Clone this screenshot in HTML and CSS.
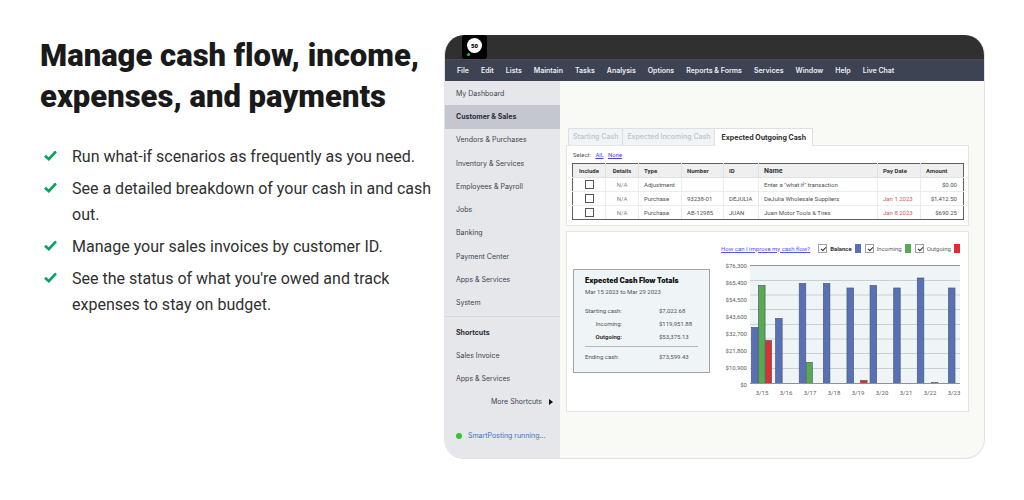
FILE: index.html
```html
<!DOCTYPE html>
<html lang="en">
<head>
<meta charset="utf-8">
<meta name="viewport" content="width=device-width, initial-scale=1">
<title>Manage cash flow, income, expenses, and payments</title>
<link rel="stylesheet" href="styles.css">
</head>
<body>
<main class="feature">
  <section class="copy">
    <h1 class="headline">Manage cash flow, income, expenses, and payments</h1>
    <ul class="benefits">
      <li><svg class="tick" viewBox="0 0 13 11" aria-hidden="true"><path d="M1 5.8 4.8 9.2 12 1.4"/></svg><span>Run what-if scenarios as frequently as you need.</span></li>
      <li><svg class="tick" viewBox="0 0 13 11" aria-hidden="true"><path d="M1 5.8 4.8 9.2 12 1.4"/></svg><span>See a detailed breakdown of your cash in and cash out.</span></li>
      <li><svg class="tick" viewBox="0 0 13 11" aria-hidden="true"><path d="M1 5.8 4.8 9.2 12 1.4"/></svg><span>Manage your sales invoices by customer ID.</span></li>
      <li><svg class="tick" viewBox="0 0 13 11" aria-hidden="true"><path d="M1 5.8 4.8 9.2 12 1.4"/></svg><span>See the status of what you're owed and track expenses to stay on budget.</span></li>
    </ul>
  </section>

  <section class="app" aria-label="Accounting application">
    <header class="titlebar">
      <div class="logo"><span class="logo-disc">50</span><span class="logo-dot"></span></div>
    </header>
    <nav class="menubar" aria-label="Menu">
      <a href="#">File</a><a href="#">Edit</a><a href="#">Lists</a><a href="#">Maintain</a><a href="#">Tasks</a><a href="#">Analysis</a><a href="#">Options</a><a href="#">Reports &amp; Forms</a><a href="#">Services</a><a href="#">Window</a><a href="#">Help</a><a href="#">Live Chat</a>
    </nav>
    <div class="body">
      <aside class="sidebar">
        <nav class="side-nav" aria-label="Sections">
          <a href="#">My Dashboard</a>
          <a href="#" class="current">Customer &amp; Sales</a>
          <a href="#">Vendors &amp; Purchases</a>
          <a href="#">Inventory &amp; Services</a>
          <a href="#">Employees &amp; Payroll</a>
          <a href="#">Jobs</a>
          <a href="#">Banking</a>
          <a href="#">Payment Center</a>
          <a href="#">Apps &amp; Services</a>
          <a href="#">System</a>
        </nav>
        <nav class="shortcuts" aria-label="Shortcuts">
          <h2>Shortcuts</h2>
          <a href="#">Sales Invoice</a>
          <a href="#">Apps &amp; Services</a>
          <a href="#" class="more">More Shortcuts <svg class="caret" viewBox="0 0 4 6" aria-hidden="true"><path d="M0 0 4 3 0 6z"/></svg></a>
        </nav>
        <p class="posting"><span class="posting-dot"></span>SmartPosting running...</p>
      </aside>

      <div class="work">
        <div class="tabs" role="tablist">
          <button type="button" role="tab">Starting Cash</button>
          <button type="button" role="tab">Expected Incoming Cash</button>
          <button type="button" role="tab" aria-selected="true" class="active">Expected Outgoing Cash</button>
        </div>
        <div class="panel entries">
          <p class="select-line">Select: <a href="#">All,</a> <a href="#">None</a></p>
          <table class="grid">
            <colgroup><col class="c-inc"><col class="c-det"><col class="c-type"><col class="c-num"><col class="c-id"><col class="c-name"><col class="c-date"><col class="c-amt"></colgroup>
            <thead>
              <tr><th class="mid">Include</th><th class="mid">Details</th><th>Type</th><th>Number</th><th>ID</th><th class="name">Name</th><th>Pay Date</th><th>Amount</th></tr>
            </thead>
            <tbody>
              <tr><td class="mid"><input type="checkbox" class="pick" aria-label="Include what if transaction"></td><td class="mid na">N/A</td><td>Adjustment</td><td></td><td></td><td>Enter a "what if" transaction</td><td></td><td class="num">$0.00</td></tr>
              <tr><td class="mid"><input type="checkbox" class="pick" aria-label="Include DeJulia Wholesale Suppliers"></td><td class="mid na">N/A</td><td>Purchase</td><td>93238-01</td><td>DEJULIA</td><td>DeJulia Wholesale Suppliers</td><td class="late">Jan 1 2023</td><td class="num">$1,412.50</td></tr>
              <tr><td class="mid"><input type="checkbox" class="pick" aria-label="Include Juan Motor Tools and Tires"></td><td class="mid na">N/A</td><td>Purchase</td><td>AB-12985</td><td>JUAN</td><td>Juan Motor Tools &amp; Tires</td><td class="late">Jan 8 2023</td><td class="num">$690.25</td></tr>
            </tbody>
          </table>
        </div>

        <div class="panel forecast">
          <div class="totals">
            <h2>Expected Cash Flow Totals</h2>
            <p class="period">Mar 15 2023 to Mar 29 2023</p>
            <dl>
              <dt>Starting cash:</dt><dd>$7,022.68</dd>
              <dt class="indent">Incoming:</dt><dd>$119,951.88</dd>
              <dt class="indent strong">Outgoing:</dt><dd>$53,375.13</dd>
            </dl>
            <dl class="ending">
              <dt>Ending cash:</dt><dd>$73,599.43</dd>
            </dl>
          </div>
          <div class="chart">
            <div class="legend">
              <a href="#">How can I improve my cash flow?</a>
              <label class="strong"><input type="checkbox" class="series" checked>Balance<span class="swatch blue"></span></label>
              <label><input type="checkbox" class="series" checked>Incoming<span class="swatch green"></span></label>
              <label><input type="checkbox" class="series" checked>Outgoing<span class="swatch red"></span></label>
            </div>
            <div class="y-axis"><span>$76,300</span><span>$65,400</span><span>$54,500</span><span>$43,600</span><span>$32,700</span><span>$21,800</span><span>$10,900</span><span>$0</span></div>
            <div class="plot-area">
              <svg class="plot" viewBox="0 0 209 119" preserveAspectRatio="none" role="img" aria-label="Balance, incoming and outgoing cash by day">
                <rect width="209" height="119" fill="#eff4f7"/>
                <path class="gridlines" d="M0 15.5H209M0 30H209M0 44.5H209M0 59.5H209M0 74H209M0 88.5H209M0 103.5H209"/>
                <g class="bar blue">
                  <rect x="1.5" y="62.5" width="6.5" height="56"/>
                  <rect x="25.5" y="53.5" width="6.5" height="65"/>
                  <rect x="49" y="18.5" width="6.5" height="100"/>
                  <rect x="73" y="18.5" width="6.5" height="100"/>
                  <rect x="96.5" y="23" width="6.5" height="95.5"/>
                  <rect x="119.5" y="20.5" width="6.5" height="98"/>
                  <rect x="143" y="23" width="6.5" height="95.5"/>
                  <rect x="166.5" y="13" width="6.5" height="105.5"/>
                  <rect x="197.5" y="23" width="6.5" height="95.5"/>
                </g>
                <g class="bar green">
                  <rect x="8.5" y="20.5" width="6.5" height="98"/>
                  <rect x="56" y="97.5" width="6" height="21"/>
                </g>
                <g class="bar red">
                  <rect x="15.5" y="75.5" width="6" height="43"/>
                  <rect x="110" y="115.5" width="6.5" height="3"/>
                  <rect x="180.5" y="117.5" width="6.5" height="1"/>
                </g>
                <path class="axis" d="M0 .5H209M0 118.5H209"/>
              </svg>
              <div class="x-axis"><span>3/15</span><span>3/16</span><span>3/17</span><span>3/18</span><span>3/19</span><span>3/20</span><span>3/21</span><span>3/22</span><span>3/23</span></div>
            </div>
          </div>
        </div>
      </div>
    </div>
  </section>
</main>
</body>
</html>
```
FILE: styles.css
```css
* { box-sizing: border-box; }

body {
  margin: 0;
  background: #fff;
  color: #1a1a1a;
  font-family: Roboto, "Liberation Sans", sans-serif;
}

h1, h2, p, ul, dl, dd { margin: 0; padding: 0; }
a { color: inherit; text-decoration: none; }

.feature {
  display: grid;
  grid-template-columns: 396fr 541fr;
  gap: 8px;
  align-items: start;
  padding: 35px 39px 40px 40px;
}

/* Copy */
.headline {
  font-size: 31px;
  line-height: 41px;
  font-weight: 900;
  font-variant-ligatures: none;
}

.benefits {
  display: grid;
  gap: 6px;
  margin-top: 27px;
  list-style: none;
  color: #303030;
  font-size: 16px;
  line-height: 26px;
}

.benefits li {
  display: grid;
  grid-template-columns: 13px 1fr;
  gap: 15px;
  padding-left: 4px;
}

.tick {
  width: 13px;
  height: 11px;
  margin-top: 6px;
  fill: none;
  stroke: #00a65c;
  stroke-width: 2.6;
}

/* Application window */
.app {
  overflow: hidden;
  border: 1px solid #e1e3e2;
  border-top: 0;
  border-radius: 20px;
  background: #f9faf6;
  font-size: 7px;
  line-height: 10px;
}

.titlebar {
  height: 24px;
  padding-left: 17px;
  background: #303030;
}

.logo {
  position: relative;
  display: grid;
  place-items: center;
  width: 25px;
  height: 24px;
  border-radius: 3px;
  background: #000;
}

.logo-disc {
  width: 15px;
  height: 15px;
  margin-bottom: 3px;
  border-radius: 50%;
  background: #fff;
  color: #000;
  font-size: 6px;
  font-weight: 900;
  line-height: 15px;
  text-align: center;
}

.logo-dot {
  position: absolute;
  left: 5px;
  bottom: 3px;
  width: 3px;
  height: 3px;
  border-radius: 50%;
  background: #00d639;
}

.menubar {
  display: flex;
  gap: 12px;
  align-items: center;
  height: 22px;
  padding-left: 12px;
  border-top: 1px solid #4a4a4a;
  background: #3d4352;
  color: #eceef1;
  font-family: Inter, Roboto, sans-serif;
  font-weight: 600;
  white-space: nowrap;
}

.body {
  display: grid;
  grid-template-columns: 115px 1fr;
}

.sidebar {
  padding-bottom: 17px;
  background: #e6e7eb;
  color: #40444b;
  font-family: Inter, Roboto, sans-serif;
  white-space: nowrap;
}

.side-nav {
  display: grid;
  grid-auto-rows: 1fr;
  height: 236px;
  padding: 1px 0;
  border-bottom: 1px solid #d6d8dc;
}

.side-nav a {
  display: flex;
  align-items: center;
  padding-left: 11px;
}

.side-nav .current {
  background: #c5c7d0;
  color: #2b2d33;
  font-weight: 700;
}

.shortcuts {
  display: grid;
  gap: 13px;
  padding: 11px 7px 0 11px;
}

.shortcuts h2 {
  color: #2b2d33;
  font-size: 7px;
  line-height: 10px;
}

.more {
  display: flex;
  gap: 7px;
  align-items: center;
  justify-content: flex-end;
}

.caret { width: 4px; height: 6px; fill: #111; }

.posting {
  display: flex;
  gap: 6px;
  align-items: center;
  margin-top: 24px;
  padding-left: 11px;
  color: #3d72b8;
}

.posting-dot {
  width: 6px;
  height: 6px;
  border-radius: 50%;
  background: #35c530;
}

/* Work area */
.work { padding: 47px 15px 0 6px; }

.tabs {
  display: flex;
  margin-left: 2px;
}

.tabs button {
  height: 17px;
  padding: 0 4px;
  border: 1px solid #dddfe0;
  border-left-width: 0;
  border-bottom: 0;
  background: #f0f4f6;
  color: #bfc2c5;
  font: 500 7px/16px Inter, Roboto, sans-serif;
}

.tabs button:first-child { border-left-width: 1px; }

.tabs .active {
  position: relative;
  z-index: 1;
  height: 18px;
  margin-bottom: -1px;
  padding: 0 6px;
  background: #fff;
  color: #2e2e2e;
  font-weight: 700;
}

.panel {
  border: 1px solid #e4e5e4;
  background: #fff;
}

.entries {
  padding: 4px 4px 5px 5px;
}

.select-line {
  padding-left: 1px;
  color: #555;
  font-size: 6px;
}

.select-line a {
  margin-left: 3px;
  color: #4343ff;
  text-decoration: underline;
}

.grid {
  width: 100%;
  margin-top: 3px;
  border: 1px solid #606060;
  border-collapse: collapse;
  table-layout: fixed;
  color: #505050;
  font-size: 6px;
  line-height: 12px;
  white-space: nowrap;
}

.c-inc, .c-det { width: 33px; }
.c-type { width: 43px; }
.c-num { width: 42px; }
.c-id { width: 35px; }
.c-date, .c-amt { width: 43px; }

.grid th, .grid td {
  height: 14px;
  padding: 0 6px 0 5px;
  border: 1px solid #ececec;
  text-align: left;
}

.grid thead { background: #efefef; color: #333; }
.grid th { border-color: #e2e2e2; }
.grid th.name { font-size: 7px; }
.grid th:first-child, .grid td:first-child { border-left-color: #606060; }
.grid th:last-child, .grid td:last-child { border-right-color: #606060; }
.grid thead th { border-top-color: #606060; }
.grid tbody tr:last-child td { border-bottom-color: #606060; }
.grid .mid { padding: 0; text-align: center; }
.grid .num { padding-left: 0; text-align: right; }
.grid .na { color: #868686; }
.grid .late { color: #cd5c5c; }

.pick, .series {
  display: block;
  width: 9px;
  height: 9px;
  margin: 0 auto;
  border: 1px solid #555;
  background: #fff;
  appearance: none;
}

/* Forecast */
.forecast {
  display: grid;
  grid-template-columns: 137px 1fr;
  gap: 11px;
  align-items: start;
  margin-top: 5px;
  padding: 11px 8px 13px 6px;
}

.totals {
  margin-top: 26px;
  padding: 5px 11px 10px;
  border: 1px solid #a0a5a6;
  background: #eff4f7;
  color: #505357;
  font-size: 6px;
}

.totals h2 {
  color: #161616;
  font-family: Inter, Roboto, sans-serif;
  font-size: 7px;
  font-weight: 900;
  line-height: 11px;
  white-space: nowrap;
}

.period { line-height: 11px; }

.totals dl {
  display: grid;
  grid-template-columns: 74px 1fr;
  row-gap: 3px;
  padding-top: 9px;
}

.totals .ending {
  margin-top: 4px;
  padding-top: 5px;
  border-top: 1px solid #b4b8ba;
}

.indent { padding-right: 37px; text-align: right; }
.strong { font-weight: 700; color: #333; }

.chart {
  display: grid;
  grid-template-columns: 26px 1fr;
  column-gap: 3px;
  align-items: start;
  color: #606060;
  font-size: 6px;
}

.legend {
  display: flex;
  grid-column: 1 / -1;
  align-items: center;
  justify-content: flex-end;
  height: 11px;
  white-space: nowrap;
}

.legend a {
  margin-right: 4px;
  color: #5353ff;
  text-decoration: underline;
}

.legend label {
  display: flex;
  gap: 3px;
  align-items: center;
  margin-left: 4px;
}

.series { border-color: #a0a0a0; }

.series:checked::after {
  content: "";
  display: block;
  width: 4px;
  height: 2px;
  margin: 2px 0 0 2px;
  border: solid #303030;
  border-width: 0 0 1px 1px;
  transform: rotate(-45deg);
}

.swatch { width: 6px; height: 9px; }
.swatch.blue { background: #5870b5; }
.swatch.green { background: #58aa52; }
.swatch.red { background: #dc2f32; }

.y-axis {
  display: flex;
  flex-direction: column;
  gap: 7px;
  margin-top: 7px;
  text-align: right;
}

.plot {
  display: block;
  width: 100%;
  height: 119px;
  margin-top: 11px;
}

.gridlines { stroke: #cbcfd1; stroke-width: 1; }
.axis { stroke: #8e9294; stroke-width: 1; }
.bar { stroke: #505a68; stroke-width: .7; }
.bar.blue { fill: #5870b5; }
.bar.green { fill: #58aa52; }
.bar.red { fill: #dc2f32; }

.x-axis {
  display: grid;
  grid-template-columns: repeat(9, 24px);
  margin-top: 4px;
  margin-right: -8px;
  text-align: center;
}

.work { padding-right: 15px; }
```
